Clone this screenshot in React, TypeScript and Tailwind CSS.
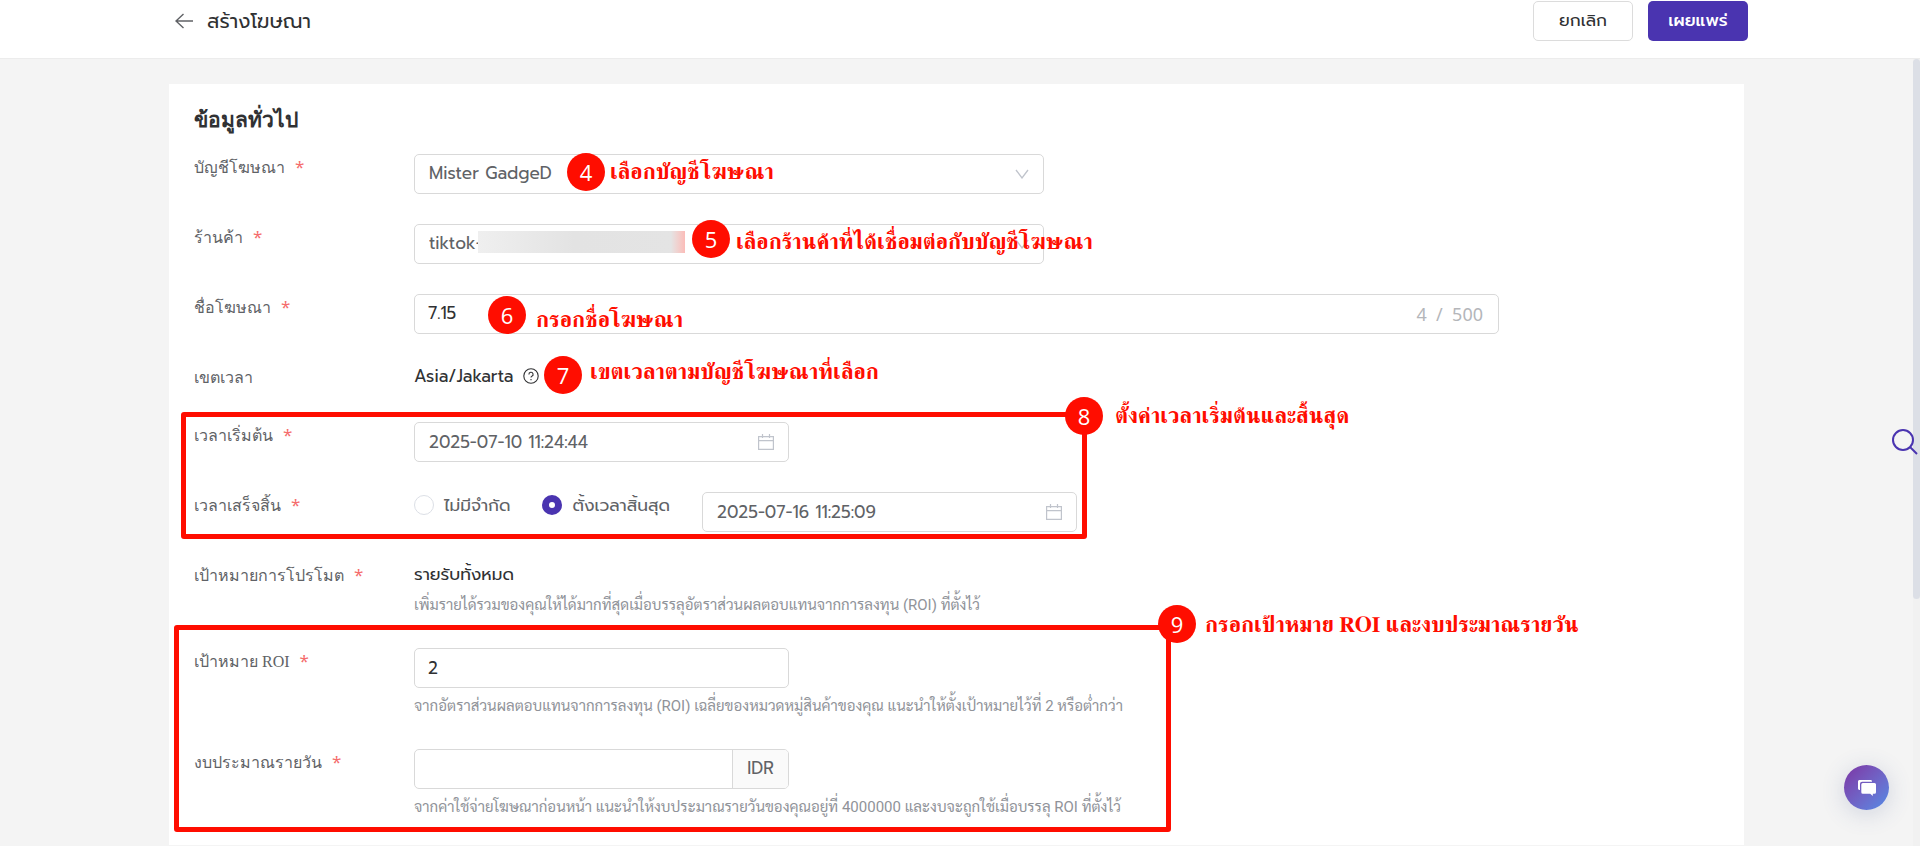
import React from "react";

const control = "h-10 rounded-[5px] border border-[#d9d9d9] bg-white text-[17px] outline-none";

function Callout({ n, text, dot, at }: { n: number; text: string; dot: string; at: string }) {
  return (
    <>
      <span
        className={`absolute z-20 flex size-[38px] items-center justify-center rounded-full bg-[#ff0d00] font-['Open_Sans',sans-serif] text-[22px] leading-none text-white ${dot}`}
      >
        {n}
      </span>
      <span
        className={`absolute z-20 whitespace-nowrap text-[22px] leading-8 font-bold text-[#ff0d00] font-['FreeSerif','Liberation_Serif',serif] ${at}`}
      >
        {text}
      </span>
    </>
  );
}

function Row({
  id,
  label,
  required = true,
  className = "min-h-10",
  children,
}: {
  id?: string;
  label: string;
  required?: boolean;
  className?: string;
  children: React.ReactNode;
}) {
  return (
    <div className={`relative flex items-start ${className}`}>
      <label htmlFor={id} className="w-[220px] shrink-0 font-['Liberation_Serif',serif] text-[16px] leading-7 text-[#606266]">
        {label}
        {required && <span className="ml-2.5 font-['Noto_Sans',sans-serif] text-[17px] leading-none text-[#f56c6c]">*</span>}
      </label>
      <div className="min-w-0 flex-1">{children}</div>
    </div>
  );
}

function Chevron() {
  return (
    <svg viewBox="0 0 14 10" className="pointer-events-none absolute top-[15px] right-[15px] h-2.5 w-3.5" fill="none" stroke="#c0c4cc" strokeWidth="1.3">
      <path d="M1 1l6 8 6-8" />
    </svg>
  );
}

function DateField({ id, value, label }: { id: string; value: string; label?: string }) {
  return (
    <div className="relative w-[375px]">
      <input id={id} aria-label={label} defaultValue={value} className={`${control} w-full pr-10 pl-3.5 text-[#606266]`} />
      <svg viewBox="0 0 18 18" className="pointer-events-none absolute top-[11px] right-3.5 size-[18px]" fill="none" stroke="#c0c4cc" strokeWidth="1.2">
        <path d="M1.6 3.6h14.8v12.8H1.6zM1.6 7.6h14.8M5.5 1v4M12.5 1v4" />
      </svg>
    </div>
  );
}

function Hint({ children }: { children: React.ReactNode }) {
  return <p className="font-['Roboto','Sarabun',sans-serif] text-[15px] leading-[22px] whitespace-nowrap text-[#909399]">{children}</p>;
}

export default function App() {
  return (
    <div className="flex min-h-screen flex-col bg-[#f4f4f4] font-['Prompt','Noto_Sans',sans-serif]">
      <header className="border-b border-[#ececec] bg-white pt-px pb-[17px]">
        <div className="mx-auto flex h-10 max-w-[1576px] items-center">
          <a href="#back" aria-label="กลับ" className="ml-[3px] flex h-10 items-center">
            <svg viewBox="0 0 18 16" className="h-4 w-[18px]" fill="none" stroke="#606266" strokeWidth="1.4">
              <path d="M8.5 1L1 8l7.5 7M1 8h17" />
            </svg>
          </a>
          <h1 className="ml-3.5 flex-1 text-[20px] text-[#303133]">สร้างโฆษณา</h1>
          <button className="h-10 w-[100px] rounded-[5px] border border-[#dcdcdc] bg-white text-[17px] text-[#303133]">ยกเลิก</button>
          <button className="ml-[15px] h-10 w-[100px] rounded-[5px] bg-[#4a34b0] text-[17px] font-medium text-white">เผยแพร่</button>
        </div>
      </header>

      <div className="flex flex-1">
        <main className="min-w-0 flex-1 pt-[25px]">
          <form className="mx-auto max-w-[1575px] bg-white px-[25px] pt-5 pb-[25px]">
            <h2 className="mb-[18px] font-['Liberation_Serif',serif] text-[21px] leading-8 font-bold text-[#303133]">ข้อมูลทั่วไป</h2>

            <div className="flex flex-col gap-[30px]">
              <Row id="account" label="บัญชีโฆษณา">
                <div className="relative w-[630px]">
                  <select id="account" className={`${control} w-full appearance-none px-3.5 text-[#606266]`}>
                    <option>Mister GadgeD</option>
                  </select>
                  <Chevron />
                </div>
                <Callout n={4} text="เลือกบัญชีโฆษณา" dot="left-[373px] -top-px" at="left-[416px] top-0.5" />
              </Row>

              <Row id="shop" label="ร้านค้า">
                <div className="relative w-[630px]">
                  <select id="shop" className={`${control} w-full appearance-none px-3.5 text-[#606266]`}>
                    <option>tiktok-</option>
                  </select>
                  <span className="absolute top-[7px] left-[64px] flex h-[22px] w-[207px]">
                    <span className="flex-1 bg-linear-to-r from-[#efefef] via-[#e3e3e3] to-[#e4e4e4]" />
                    <span className="w-3.5 bg-linear-to-r from-[#e4e4e4] to-[#fbbcb8]" />
                  </span>
                  <Chevron />
                </div>
                <Callout n={5} text="เลือกร้านค้าที่ได้เชื่อมต่อกับบัญชีโฆษณา" dot="left-[498px] -top-1" at="left-[542px] top-0.5" />
              </Row>

              <Row id="name" label="ชื่อโฆษณา">
                <div className={`${control} flex max-w-[1085px] items-center px-[13px]`}>
                  <input id="name" defaultValue="7.15" className="min-w-0 flex-1 text-[#303133] outline-none" />
                  <span className="pr-0.5 font-['Noto_Sans',sans-serif] text-[18px] whitespace-pre text-[#b4b6ba]">4&nbsp; /&nbsp; 500</span>
                </div>
                <Callout n={6} text="กรอกชื่อโฆษณา" dot="left-[294px] top-0.5" at="left-[342px] top-2.5" />
              </Row>

              <Row label="เขตเวลา" required={false} className="h-7">
                <div className="flex items-center gap-2.5 text-[17px] leading-6 text-[#303133]">
                  Asia/Jakarta
                  <svg viewBox="0 0 16 16" className="size-4" fill="none" stroke="#303133" strokeWidth="1.1">
                    <circle cx="8" cy="8" r="7.2" />
                    <path d="M5.9 6.4a2.1 2.1 0 1 1 2.9 1.9c-.6.3-.8.6-.8 1.3M8 11v1.2" />
                  </svg>
                </div>
                <Callout n={7} text="เขตเวลาตามบัญชีโฆษณาที่เลือก" dot="left-[350px] -top-2" at="left-[396px] -top-2" />
              </Row>

              <div className="relative flex flex-col gap-[30px]">
                <Row id="start" label="เวลาเริ่มต้น">
                  <DateField id="start" value="2025-07-10 11:24:44" />
                </Row>
                <Row label="เวลาเสร็จสิ้น">
                  <div className="flex items-start text-[17px] leading-[26px] text-[#606266]">
                    <label className="flex items-center gap-2.5">
                      <input type="radio" name="end" className="size-5 appearance-none rounded-full border border-[#dcdfe6]" />
                      ไม่มีจำกัด
                    </label>
                    <label className="ml-8 flex items-center gap-2.5">
                      <input
                        type="radio"
                        name="end"
                        defaultChecked
                        className="size-5 appearance-none rounded-full border-[#4a34b0] checked:border-[7px]"
                      />
                      ตั้งเวลาสิ้นสุด
                    </label>
                    <div className="ml-8">
                      <DateField id="end" label="เวลาสิ้นสุด" value="2025-07-16 11:25:09" />
                    </div>
                  </div>
                </Row>
                <div className="pointer-events-none absolute -top-2.5 -left-[13px] h-[127px] w-[906px] rounded-[3px] border-5 border-[#ff0d00]" />
                <Callout n={8} text="ตั้งค่าเวลาเริ่มต้นและสิ้นสุด" dot="left-[871px] -top-[25px]" at="left-[921px] -top-[22px]" />
              </div>

              <Row label="เป้าหมายการโปรโมต" className="h-14">
                <p className="text-[17px] leading-6 text-[#303133]">รายรับทั้งหมด</p>
                <div className="mt-2">
                  <Hint>เพิ่มรายได้รวมของคุณให้ได้มากที่สุดเมื่อบรรลุอัตราส่วนผลตอบแทนจากการลงทุน (ROI) ที่ตั้งไว้</Hint>
                </div>
              </Row>

              <div className="relative flex flex-col gap-[30px]">
                <Row id="roi" label="เป้าหมาย ROI" className="h-[71px]">
                  <input id="roi" defaultValue="2" className={`${control} mb-[7px] block w-[375px] px-[13px] text-[#303133]`} />
                  <Hint>จากอัตราส่วนผลตอบแทนจากการลงทุน (ROI) เฉลี่ยของหมวดหมู่สินค้าของคุณ แนะนำให้ตั้งเป้าหมายไว้ที่ 2 หรือต่ำกว่า</Hint>
                </Row>
                <Row id="budget" label="งบประมาณรายวัน" className="h-[71px]">
                  <div className={`${control} mb-[7px] flex w-[375px] overflow-hidden`}>
                    <input id="budget" className="min-w-0 flex-1 px-[13px] outline-none" />
                    <span className="flex w-14 items-center justify-center border-l border-[#d9d9d9] bg-[#fafafa] text-[#606266]">IDR</span>
                  </div>
                  <Hint>จากค่าใช้จ่ายโฆษณาก่อนหน้า แนะนำให้งบประมาณรายวันของคุณอยู่ที่ 4000000 และงบจะถูกใช้เมื่อบรรลุ ROI ที่ตั้งไว้</Hint>
                </Row>
                <div className="pointer-events-none absolute -top-[23px] -left-5 h-[207px] w-[997px] rounded-[3px] border-5 border-[#ff0d00]" />
                <Callout n={9} text="กรอกเป้าหมาย ROI และงบประมาณรายวัน" dot="left-[964px] -top-[43px]" at="left-[1011px] -top-[39px]" />
              </div>
            </div>
          </form>
        </main>
        <div className="w-[7px] bg-[#f1f1f1]">
          <div className="h-[540px] rounded-full bg-[#dcdfe6]" />
        </div>
      </div>

      <button aria-label="ค้นหา" className="fixed top-[429px] right-0.5 z-30">
        <svg viewBox="0 0 26 26" className="size-[26px]" fill="none" stroke="#4a34b0" strokeWidth="2">
          <circle cx="11" cy="11" r="10" />
          <path d="M18 18l7 7" />
        </svg>
      </button>
      <button
        aria-label="แชต"
        className="fixed right-[31px] bottom-9 z-30 flex size-[45px] items-center justify-center rounded-full bg-linear-to-br from-[#7b32a4] to-[#4f8be6] shadow-[0_4px_24px_rgba(60,80,140,0.2)]"
      >
        <svg viewBox="0 0 18 16" className="h-4 w-[18px]" fill="#fff">
          <path d="M1.6 0h11a1.4 1.4 0 0 1 1.4 1.4v.4H4.2A2.2 2.2 0 0 0 2 4v6H1.4A1.4 1.4 0 0 1 0 8.6V1.5A1.5 1.5 0 0 1 1.6 0z" />
          <path d="M4.8 3h11.7A1.5 1.5 0 0 1 18 4.5v7.8a1.5 1.5 0 0 1-1.5 1.5h-1.7V16l-2.6-2.2H4.8a1.5 1.5 0 0 1-1.5-1.5V4.5A1.5 1.5 0 0 1 4.8 3z" />
        </svg>
      </button>
    </div>
  );
}
